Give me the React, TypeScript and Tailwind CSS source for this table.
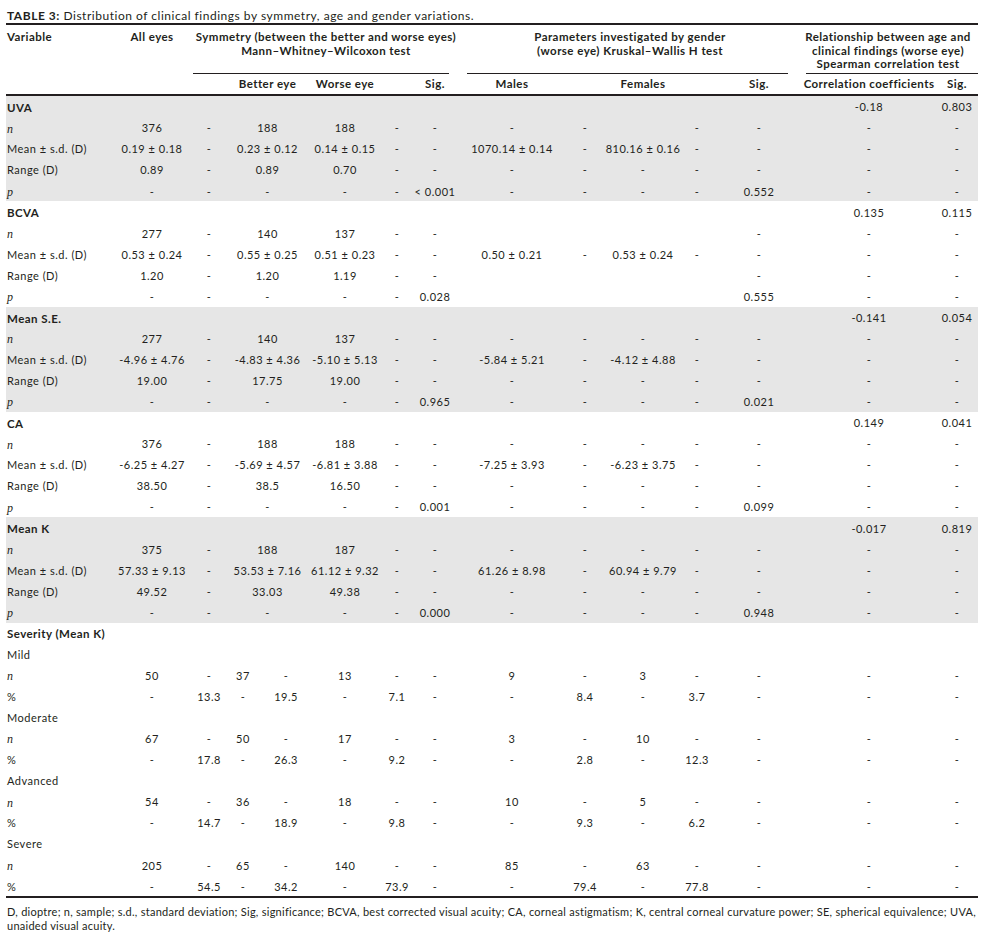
import React from "react";

type Cell = [string, string];
type Row = { label: React.ReactNode; bold?: boolean; cells: Cell[]; gray: boolean };

const COLCLS: Record<string, string> = {
  "2": "col-start-3",
  "3": "col-start-5",
  "4": "col-start-7",
  m: "col-start-7 col-span-3",
  "5": "col-start-9",
  "6": "col-start-11",
  "7": "col-start-13",
  "8": "col-start-15",
  "9": "col-start-17",
  "10": "col-start-19",
  "11": "col-start-21",
  "12": "col-start-23",
  "13": "col-start-25",
  "14": "col-start-27",
  "15": "col-start-29",
};

const GRID =
  "grid grid-cols-[120px_18px_16px_41px_16px_18px_16px_21px_28px_37px_16px_36px_16px_22px_16px_61px_16px_57px_16px_42px_16px_38px_16px_46px_16px_94px_16px_72px_16px_13px]";

const STAT_COLS = ["2", "3", "m", "6", "7", "8", "9", "10", "11", "12", "13", "14", "15"];
const SEV_COLS = ["2", "3", "4", "5", "6", "7", "8", "9", "10", "11", "12", "13", "14", "15"];

function mk(cols: string[], vals: (string | null)[]): Cell[] {
  const out: Cell[] = [];
  vals.forEach((v, i) => {
    if (v !== null) out.push([cols[i], v]);
  });
  return out;
}

const N = <span className="italic font-['Liberation_Serif',serif] text-[12px] tracking-normal">n</span>;
const P = <span className="italic font-['Liberation_Serif',serif] text-[12px] tracking-normal">p</span>;

function group(
  name: string,
  corr: string,
  sig: string,
  n: (string | null)[],
  mean: (string | null)[],
  range: (string | null)[],
  p: (string | null)[],
  gray: boolean
): Row[] {
  return [
    { label: name, bold: true, cells: [["14", corr], ["15", sig]], gray },
    { label: N, cells: mk(STAT_COLS, n), gray },
    { label: "Mean ± s.d. (D)", cells: mk(STAT_COLS, mean), gray },
    { label: "Range (D)", cells: mk(STAT_COLS, range), gray },
    { label: P, cells: mk(STAT_COLS, p), gray },
  ];
}

function sev(name: string, n: string[], pct: string[]): Row[] {
  return [
    { label: name, cells: [], gray: false },
    { label: N, cells: mk(SEV_COLS, n), gray: false },
    { label: "%", cells: mk(SEV_COLS, pct), gray: false },
  ];
}

const d = "-";

const ROWS: Row[] = [
  ...group(
    "UVA",
    "-0.18",
    "0.803",
    ["376", d, "188", "188", d, d, d, d, null, d, d, d, d],
    ["0.19 ± 0.18", d, "0.23 ± 0.12", "0.14 ± 0.15", d, d, "1070.14 ± 0.14", d, "810.16 ± 0.16", d, d, d, d],
    ["0.89", d, "0.89", "0.70", d, d, d, d, d, d, d, d, d],
    [d, d, d, d, d, "< 0.001", d, d, d, d, "0.552", d, d],
    true
  ),
  ...group(
    "BCVA",
    "0.135",
    "0.115",
    ["277", d, "140", "137", d, d, null, null, null, null, d, d, d],
    ["0.53 ± 0.24", d, "0.55 ± 0.25", "0.51 ± 0.23", d, d, "0.50 ± 0.21", d, "0.53 ± 0.24", d, d, d, d],
    ["1.20", d, "1.20", "1.19", d, d, null, null, null, null, d, d, d],
    [d, d, d, d, d, "0.028", null, null, null, null, "0.555", d, d],
    false
  ),
  ...group(
    "Mean S.E.",
    "-0.141",
    "0.054",
    ["277", d, "140", "137", d, d, d, d, d, d, d, d, d],
    ["-4.96 ± 4.76", d, "-4.83 ± 4.36", "-5.10 ± 5.13", d, d, "-5.84 ± 5.21", d, "-4.12 ± 4.88", d, d, d, d],
    ["19.00", d, "17.75", "19.00", d, d, d, d, d, d, d, d, d],
    [d, d, d, d, d, "0.965", d, d, d, d, "0.021", d, d],
    true
  ),
  ...group(
    "CA",
    "0.149",
    "0.041",
    ["376", d, "188", "188", d, d, d, d, d, d, d, d, d],
    ["-6.25 ± 4.27", d, "-5.69 ± 4.57", "-6.81 ± 3.88", d, d, "-7.25 ± 3.93", d, "-6.23 ± 3.75", d, d, d, d],
    ["38.50", d, "38.5", "16.50", d, d, d, d, d, d, d, d, d],
    [d, d, d, d, d, "0.001", d, d, d, d, "0.099", d, d],
    false
  ),
  ...group(
    "Mean K",
    "-0.017",
    "0.819",
    ["375", d, "188", "187", d, d, d, d, d, d, d, d, d],
    ["57.33 ± 9.13", d, "53.53 ± 7.16", "61.12 ± 9.32", d, d, "61.26 ± 8.98", d, "60.94 ± 9.79", d, d, d, d],
    ["49.52", d, "33.03", "49.38", d, d, d, d, d, d, d, d, d],
    [d, d, d, d, d, "0.000", d, d, d, d, "0.948", d, d],
    true
  ),
  { label: "Severity (Mean K)", bold: true, cells: [], gray: false },
  ...sev(
    "Mild",
    ["50", d, "37", d, "13", d, d, "9", d, "3", d, d, d, d],
    [d, "13.3", d, "19.5", d, "7.1", d, d, "8.4", d, "3.7", d, d, d]
  ),
  ...sev(
    "Moderate",
    ["67", d, "50", d, "17", d, d, "3", d, "10", d, d, d, d],
    [d, "17.8", d, "26.3", d, "9.2", d, d, "2.8", d, "12.3", d, d, d]
  ),
  ...sev(
    "Advanced",
    ["54", d, "36", d, "18", d, d, "10", d, "5", d, d, d, d],
    [d, "14.7", d, "18.9", d, "9.8", d, d, "9.3", d, "6.2", d, d, d]
  ),
  ...sev(
    "Severe",
    ["205", d, "65", d, "140", d, d, "85", d, "63", d, d, d, d],
    [d, "54.5", d, "34.2", d, "73.9", d, d, "79.4", d, "77.8", d, d, d]
  ),
];

function C({ col, children }: { col: string; children: React.ReactNode }) {
  return (
    <div className={`${COLCLS[col]} row-start-1 min-w-0 flex justify-center whitespace-nowrap`}>
      {children}
    </div>
  );
}

export default function App() {
  return (
    <div className="w-[1007px] h-[937px] bg-white text-[#231f20] font-['Lato',sans-serif] text-[11px]">
      <div className="ml-[6px] w-[972px] pt-[9px]">
        <div className="leading-[14px] text-[12px] tracking-[0.52px] pl-[1px] border-b-2 border-[#231f20]">
          <span className="font-bold">TABLE 3:</span> Distribution of clinical findings by symmetry, age and gender variations.
        </div>

        {/* group headers */}
        <div className="flex font-bold text-[11.5px] tracking-[0.45px] leading-[13.5px] pt-[5px]">
          <div className="w-[120px] pl-[1px]">Variable</div>
          <div className="ml-[18px] w-[16px] flex justify-center whitespace-nowrap">All eyes</div>
          <div className="ml-[33px] w-[266px] h-[44px] flex flex-col">
            <div className="flex flex-col items-center whitespace-nowrap">
              <span>Symmetry (between the better and worse eyes)</span>
              <span>Mann–Whitney–Wilcoxon test</span>
            </div>
            <div className="mt-auto w-[256px] h-px bg-[#231f20]" />
          </div>
          <div className="ml-[8px] w-[326px] h-[44px] flex flex-col">
            <div className="flex flex-col items-center whitespace-nowrap">
              <span>Parameters investigated by gender</span>
              <span>(worse eye) Kruskal–Wallis H test</span>
            </div>
            <div className="mt-auto w-[321px] h-px bg-[#231f20]" />
          </div>
          <div className="ml-[5px] w-[180px] h-[44px] flex flex-col">
            <div className="flex flex-col items-center whitespace-nowrap">
              <span>Relationship between age and</span>
              <span>clinical findings (worse eye)</span>
              <span>Spearman correlation test</span>
            </div>
            <div className="mt-auto ml-[8px] w-[172px] h-px bg-[#231f20]" />
          </div>
        </div>

        {/* sub headers */}
        <div className={`${GRID} h-[22px] items-center font-bold text-[11.5px] tracking-[0.45px] border-b-2 border-[#231f20]`}>
          <C col="m">Better eye</C>
          <C col="6">Worse eye</C>
          <C col="8">Sig.</C>
          <C col="9">Males</C>
          <C col="11">Females</C>
          <C col="13">Sig.</C>
          <C col="14">Correlation coefficients</C>
          <C col="15">Sig.</C>
        </div>

        {/* body */}
        <div className="border-b-2 border-[#231f20] tracking-[0.5px]">
          {ROWS.map((r, i) => (
            <div
              key={i}
              className={`${GRID} h-[21.07px] items-center pt-[2px] ${r.gray ? "bg-[#e6e6e6]" : ""}`}
            >
              <div
                className={`col-start-1 row-start-1 pl-[1px] whitespace-nowrap ${
                  r.bold ? "font-bold text-[11.5px] tracking-[0.45px]" : ""
                }`}
              >
                {r.label}
              </div>
              {r.cells.map(([c, v], j) => (
                <C key={j} col={c}>
                  {v}
                </C>
              ))}
            </div>
          ))}
        </div>

        <div className="pt-[7px] leading-[14px] pl-[1px] tracking-[0.26px] whitespace-nowrap">
          D, dioptre; n, sample; s.d., standard deviation; Sig, significance; BCVA, best corrected visual acuity; CA, corneal astigmatism; K, central corneal curvature power; SE, spherical equivalence; UVA,
          <br />
          unaided visual acuity.
        </div>
      </div>
    </div>
  );
}
